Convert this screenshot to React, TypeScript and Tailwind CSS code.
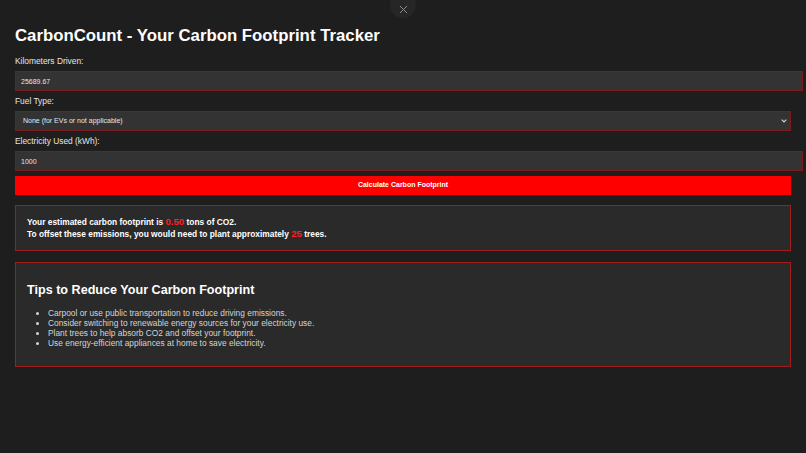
import { useState } from "react";

const tips = [
  "Carpool or use public transportation to reduce driving emissions.",
  "Consider switching to renewable energy sources for your electricity use.",
  "Plant trees to help absorb CO2 and offset your footprint.",
  "Use energy-efficient appliances at home to save electricity.",
];

export default function App() {
  const [km, setKm] = useState("25689.67");
  const [fuel, setFuel] = useState("none");
  const [kwh, setKwh] = useState("1000");

  return (
    <div className="relative min-h-screen bg-[#1e1e1e] px-[15px] pt-[26px] font-['Liberation_Sans',Arial,sans-serif] text-[#e6e6e6]">
      {/* close button floating at the top */}
      <div className="absolute left-[390px] top-[-8px] flex h-[26px] w-[26px] items-end justify-center rounded-full bg-[#262626] pb-[4px]">
        <svg width="9" height="9" viewBox="0 0 10 10" className="text-[#8f8f8f]">
          <path d="M1 1L9 9M9 1L1 9" stroke="currentColor" strokeWidth="1.1" />
        </svg>
      </div>

      <h1 className="text-[16.8px] font-bold leading-[19px] text-white">
        CarbonCount - Your Carbon Footprint Tracker
      </h1>

      <label className="mt-[11px] block text-[8.4px] leading-[10px]">Kilometers Driven:</label>
      <input
        value={km}
        onChange={(e) => setKm(e.target.value)}
        className="mt-[5px] box-content block h-[18px] w-full border border-[#7a1c1c] bg-[#333333] px-[5px] text-[7px] text-[#e6e6e6] outline-none"
      />

      <label className="mt-[5px] block text-[8.4px] leading-[10px]">Fuel Type:</label>
      <div className="relative mt-[5px]">
        <select
          value={fuel}
          onChange={(e) => setFuel(e.target.value)}
          className="block h-[20px] w-full appearance-none border border-[#7a1c1c] bg-[#333333] pl-[7px] text-[7px] text-[#e6e6e6] outline-none"
        >
          <option value="none">None (for EVs or not applicable)</option>
          <option value="petrol">Petrol</option>
          <option value="diesel">Diesel</option>
        </select>
        <svg
          width="6"
          height="4"
          viewBox="0 0 6 4"
          className="pointer-events-none absolute right-[4px] top-[8px] text-[#d0d0d0]"
        >
          <path d="M0.7 0.7L3 3L5.3 0.7" fill="none" stroke="currentColor" strokeWidth="1.2" />
        </svg>
      </div>

      <label className="mt-[5px] block text-[8.4px] leading-[10px]">Electricity Used (kWh):</label>
      <input
        value={kwh}
        onChange={(e) => setKwh(e.target.value)}
        className="mt-[5px] box-content block h-[18px] w-full border border-[#7a1c1c] bg-[#333333] px-[5px] text-[7px] text-[#e6e6e6] outline-none"
      />

      <button className="mt-[5px] block h-[19px] w-full bg-[#ff0000] text-[7px] font-bold text-white">
        Calculate Carbon Footprint
      </button>

      <div className="mt-[10px] border border-[#a11d1d] bg-[#2a2a2a] px-[11px] py-[10px]">
        <p className="text-[8.4px] font-bold leading-[12px] text-white">
          Your estimated carbon footprint is <span className="text-[9.6px] text-[#ff1f1f]">0.50</span> tons of CO2.
          <br />
          To offset these emissions, you would need to plant approximately{" "}
          <span className="text-[9.6px] text-[#ff1f1f]">25</span> trees.
        </p>
      </div>

      <div className="mt-[11px] border border-[#a11d1d] bg-[#2a2a2a] px-[11px] py-[10px]">
        <h2 className="mt-[10px] text-[12.6px] font-bold leading-[14px] text-white">
          Tips to Reduce Your Carbon Footprint
        </h2>
        <ul className="mb-[8px] mt-[11px] list-disc pl-[21px] text-[8.4px] leading-[10px] text-[#d4d4d4]">
          {tips.map((t) => (
            <li key={t}>{t}</li>
          ))}
        </ul>
      </div>
    </div>
  );
}
